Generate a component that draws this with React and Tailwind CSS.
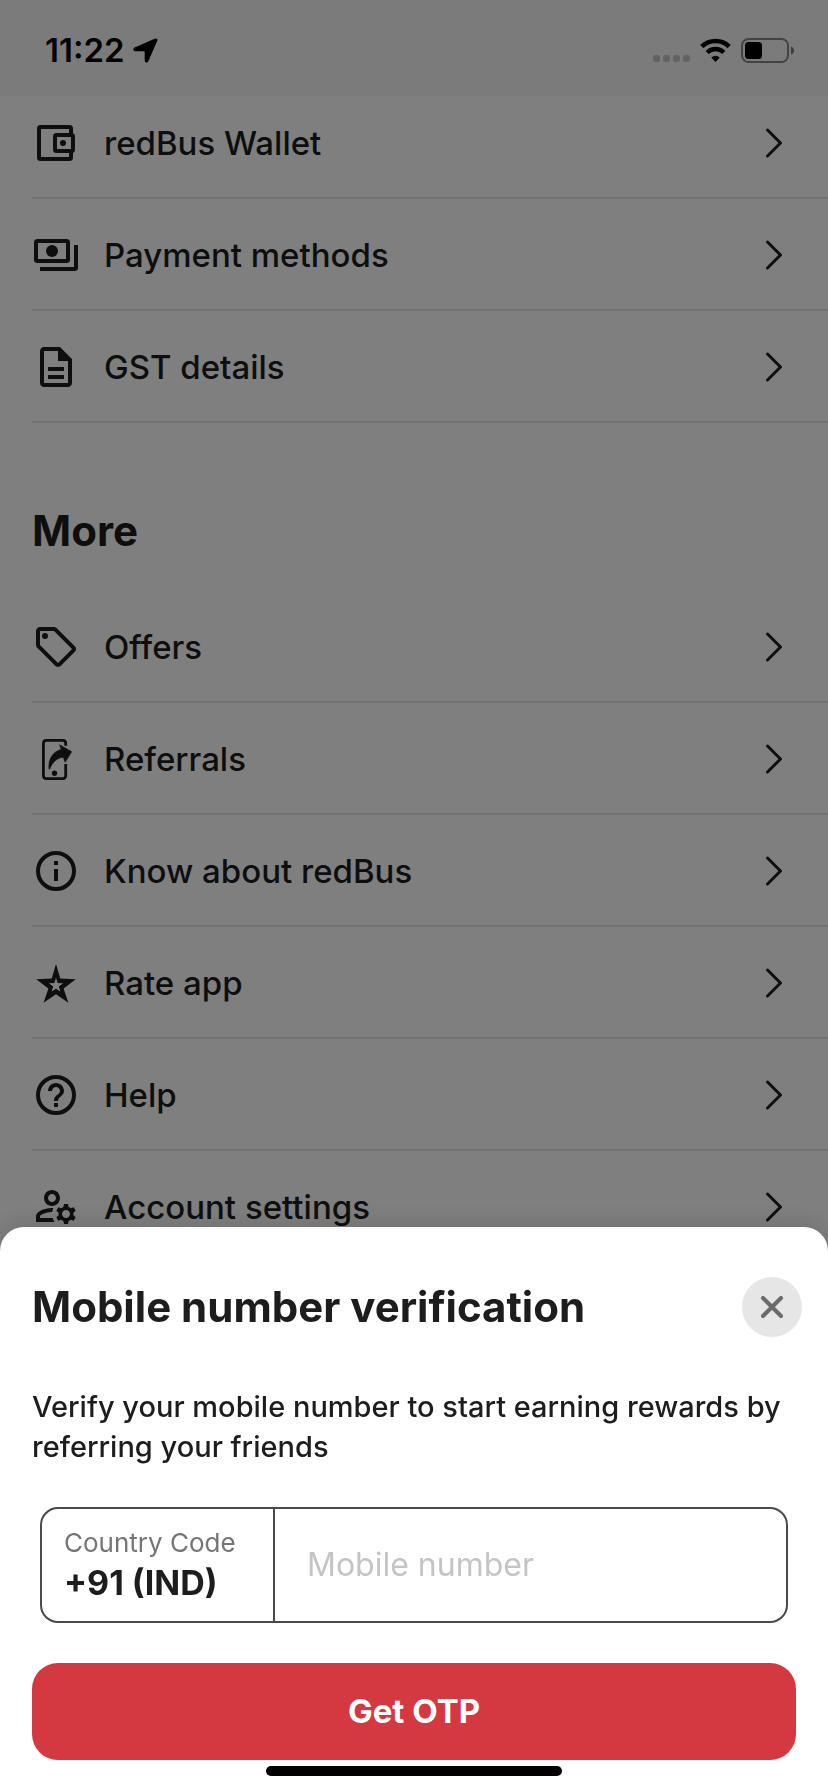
import { useId } from "react";

function Glyph({ children, viewBox = "0 0 24 24" }) {
  return (
    <svg viewBox={viewBox} className="size-12 shrink-0" fill="currentColor" aria-hidden="true">
      {children}
    </svg>
  );
}

const WalletIcon = () => (
  <Glyph viewBox="0 0 48 48">
    <g fill="none" stroke="currentColor" strokeWidth="4">
      <path d="M39 15V9.500Q39 8 37.500 8H8.500Q7 8 7 9.500V38.500Q7 40 8.500 40H37.500Q39 40 39 38.500V33" />
      <rect x="23" y="16" width="18" height="16" rx="1.500" />
    </g>
    <circle cx="31" cy="24" r="3" />
  </Glyph>
);

const PaymentsIcon = () => (
  <Glyph viewBox="0 0 48 48">
    <g fill="none" stroke="currentColor" strokeWidth="4">
      <rect x="4" y="10" width="32" height="20" rx="1.500" />
      <path d="M44 14V36.500Q44 38 42.500 38H8" />
    </g>
    <circle cx="20" cy="20" r="6" />
  </Glyph>
);

const DocumentIcon = () => (
  <Glyph>
    <path d="M8 16h8v2H8zm0-4h8v2H8zm6-10H6c-1.100 0-2 .9-2 2v16c0 1.100.89 2 1.990 2H18c1.100 0 2-.9 2-2V8l-6-6zm4 18H6V4h7v5h5v11z" />
  </Glyph>
);

const TagIcon = () => (
  <Glyph>
    <path d="M21.410 11.580l-9-9C12.050 2.220 11.550 2 11 2H4c-1.100 0-2 .9-2 2v7c0 .55.22 1.050.59 1.420l9 9c.36.36.86.58 1.410.58s1.050-.22 1.410-.59l7-7c.37-.36.59-.86.59-1.410s-.23-1.060-.59-1.420zM13 20.010L4 11V4h7v-.010l9 9-7 7.020z" />
    <circle cx="6.500" cy="6.500" r="1.500" />
  </Glyph>
);

const ReferralIcon = () => (
  <Glyph viewBox="0 0 48 48">
    <path
      d="M33.700 10.700V8.400Q33.700 5.400 30.700 5.400H14.400Q11.400 5.400 11.400 8.400V40.600Q11.400 43.600 14.400 43.600H30.700Q33.700 43.600 33.700 40.600V29"
      fill="none"
      stroke="currentColor"
      strokeWidth="2.800"
    />
    <path
      d="M27.600 9.800L39.700 16.700L33.200 27.300L31.200 22.200C25.500 22.600 20.500 27 17.600 34.200L17 34.200C16 24.500 20.500 16.500 29.200 14.500Z"
      stroke="currentColor"
      strokeWidth="0.600"
      strokeLinejoin="round"
    />
    <circle cx="22.500" cy="38.300" r="2.700" />
  </Glyph>
);

const InfoIcon = () => (
  <Glyph>
    <circle cx="12" cy="12" r="9" fill="none" stroke="currentColor" strokeWidth="2" />
    <path d="M11 7h2v2h-2zm0 4h2v6h-2z" />
  </Glyph>
);

const StarIcon = () => (
  <Glyph viewBox="0 0 48 48">
    <path
      fillRule="evenodd"
      d="M24 5L28.300 19.600L43.800 20.300L31.600 29.500L36.400 43.800L24 35.200L11.600 43.800L16.400 29.500L4.200 20.300L19.700 19.600ZM24 18.800L22.400 24L16.800 24.300L21.200 27.600L19.600 32.600L24 29.700L28.400 32.600L26.800 27.600L31.200 24.300L25.600 24Z"
    />
  </Glyph>
);

const HelpIcon = () => (
  <Glyph>
    <circle cx="12" cy="12" r="9" fill="none" stroke="currentColor" strokeWidth="2" />
    <path d="M11 16h2v2h-2zM12 6c-2.210 0-4 1.790-4 4h2c0-1.100.9-2 2-2s2 .9 2 2c0 2-3 1.750-3 5h2c0-2.250 3-2.500 3-5 0-2.210-1.790-4-4-4z" />
  </Glyph>
);

const AccountIcon = () => (
  <Glyph viewBox="0 0.500 24 24">
    <path d="M4 18v-.65c0-.34.16-.66.41-.81C6.100 15.530 8.030 15 10 15c.03 0 .05 0 .08.010.1-.7.3-1.370.59-1.980-.22-.02-.44-.03-.67-.03-2.420 0-4.680.67-6.610 1.820-.88.52-1.390 1.500-1.390 2.530V20h9.260c-.42-.6-.75-1.280-.97-2H4zM10 12c2.210 0 4-1.790 4-4s-1.790-4-4-4-4 1.790-4 4 1.790 4 4 4zm0-6c1.100 0 2 .9 2 2s-.9 2-2 2-2-.9-2-2 .9-2 2-2zM20.750 16c0-.22-.03-.42-.06-.63l1.140-1.010-1-1.730-1.450.49c-.32-.27-.68-.48-1.080-.63L18 11h-2l-.3 1.490c-.4.15-.76.36-1.080.63l-1.450-.49-1 1.730 1.140 1.010c-.03.21-.06.41-.06.63s.03.42.06.63l-1.140 1.010 1 1.730 1.450-.49c.32.27.68.48 1.080.63L16 21h2l.3-1.490c.4-.15.76-.36 1.080-.63l1.450.49 1-1.730-1.140-1.010c.03-.21.06-.41.06-.63zM17 18c-1.100 0-2-.9-2-2s.9-2 2-2 2 .9 2 2-.9 2-2 2z" />
  </Glyph>
);

const paymentItems = [
  { label: "redBus Wallet", Icon: WalletIcon },
  { label: "Payment methods", Icon: PaymentsIcon },
  { label: "GST details", Icon: DocumentIcon },
];

const moreItems = [
  { label: "Offers", Icon: TagIcon },
  { label: "Referrals", Icon: ReferralIcon },
  { label: "Know about redBus", Icon: InfoIcon },
  { label: "Rate app", Icon: StarIcon },
  { label: "Help", Icon: HelpIcon },
  { label: "Account settings", Icon: AccountIcon },
];

function MenuList({ items }) {
  return (
    <ul className="ml-8">
      {items.map(({ label, Icon }) => (
        <li key={label}>
          <a href="#" className="flex h-28 items-center gap-6 pr-[46px] shadow-[inset_0_-2px_0_#e6e6e6]">
            <Icon />
            <span className="flex-1 text-[33px] leading-10 font-medium">{label}</span>
            <svg viewBox="0 0 16 30" className="h-[30px] w-4" fill="none" stroke="currentColor" strokeWidth="3" strokeLinecap="round" strokeLinejoin="round" aria-hidden="true">
              <path d="M1.500 2L14.500 15L1.500 28" />
            </svg>
          </a>
        </li>
      ))}
    </ul>
  );
}

function StatusBar() {
  return (
    <header className="absolute inset-x-0 top-0 flex h-24 items-center justify-between bg-[#f6f6f6] pt-1 pr-[34px] pl-[45px] text-black">
      <div className="flex items-center gap-2">
        <span className="text-[33px] leading-10 font-semibold">11:22</span>
        <svg viewBox="0 0 25 25" className="size-[25px]" fill="currentColor" aria-hidden="true">
          <path d="M22.300 .6L1.600 9.600C-.3 10.500 .1 13.200 2.200 13.200H10.900Q11.700 13.200 11.700 14V22.600C11.700 24.900 14.300 25.200 15.200 23.400L24.300 2.800C25 1.100 23.700 0 22.300 .6Z" />
        </svg>
      </div>
      <div className="flex items-center gap-[10px]">
        <svg viewBox="0 0 37 25" className="h-[25px] w-[37px]" fill="#000" fillOpacity="0.200" aria-hidden="true">
          <rect x="0" y="17" width="7" height="7" rx="2.500" />
          <rect x="10" y="17" width="7" height="7" rx="2.500" />
          <rect x="20" y="17" width="7" height="7" rx="2.500" />
          <rect x="30" y="17" width="7" height="7" rx="2.500" />
        </svg>
        <svg viewBox="0 0 31 25" className="h-[25px] w-[31px]" fill="none" stroke="currentColor" aria-hidden="true">
          <path d="M1.800 8.600A19.400 19.400 0 0 1 29.200 8.600" strokeWidth="4.600" />
          <path d="M7.200 14.500A11.700 11.700 0 0 1 23.800 14.500" strokeWidth="4.400" />
          <path d="M11.300 19.600Q15.500 16 19.700 19.600L15.500 24Z" fill="currentColor" stroke="none" />
        </svg>
        <svg viewBox="0 0 53 25" className="h-[25px] w-[53px]" aria-hidden="true">
          <rect x="1" y="1" width="46" height="23" rx="6.500" fill="none" stroke="#000" strokeOpacity="0.450" strokeWidth="2" />
          <rect x="4" y="4" width="17" height="17" rx="3.500" />
          <path d="M50 8.500Q53 9.500 53 12.500Q53 15.500 50 16.500Z" fillOpacity="0.500" />
        </svg>
      </div>
    </header>
  );
}

function VerificationSheet() {
  const titleId = useId();
  return (
    <section role="dialog" aria-modal="true" aria-labelledby={titleId} className="rounded-t-[24px] bg-white px-8 pt-[50px] pb-4 shadow-[0_-4px_24px_rgba(0,0,0,0.12)]">
      <div className="-mr-[6px] flex h-[60px] items-center justify-between">
        <h2 id={titleId} className="text-[42px] leading-[48px] font-bold">Mobile number verification</h2>
        <button type="button" aria-label="Close" className="flex size-[60px] items-center justify-center rounded-full bg-[#e6e6e6] text-[#6b6b6b]">
          <svg viewBox="0 0 22 22" className="size-[22px]" fill="none" stroke="currentColor" strokeWidth="4" strokeLinecap="round" aria-hidden="true">
            <path d="M2 2L20 20M20 2L2 20" />
          </svg>
        </button>
      </div>
      <p className="mt-[50px] text-[29px] leading-10 font-medium">
        Verify your mobile number to start earning rewards by referring your friends
      </p>
      <form onSubmit={(e) => e.preventDefault()}>
        <div className="mx-2 mt-10 flex h-29 rounded-[18px] border-2 border-[#4a4a4a]">
          <button type="button" className="flex w-[233px] flex-col justify-center border-r-2 border-[#4a4a4a] pl-[22px] text-left">
            <span className="text-[26px] leading-9 text-[#757575]">Country Code</span>
            <span className="text-[34px] leading-11 font-bold">+91 (IND)</span>
          </button>
          <input type="tel" aria-label="Mobile number" placeholder="Mobile number" className="min-w-0 flex-1 rounded-r-[16px] px-8 text-[32px] outline-none placeholder:text-[#c4c4c4]" />
        </div>
        <button type="submit" className="mt-10 h-[97px] w-full rounded-[26px] bg-[#d43841] text-[33px] font-bold text-white">
          Get OTP
        </button>
      </form>
      <div className="mx-auto mt-[6px] h-[10px] w-74 rounded-full bg-black" />
    </section>
  );
}

export default function App() {
  return (
    <div className="relative min-h-screen overflow-hidden bg-white font-['Inter',sans-serif] text-[#1d1d1d]">
      <main className="pt-[87px]">
        <MenuList items={paymentItems} />
        <h2 className="px-8 pt-[84px] pb-9 text-[42px] leading-[48px] font-bold">More</h2>
        <MenuList items={moreItems} />
      </main>
      <StatusBar />
      <div className="fixed inset-0 flex flex-col justify-end bg-black/50">
        <VerificationSheet />
      </div>
    </div>
  );
}
